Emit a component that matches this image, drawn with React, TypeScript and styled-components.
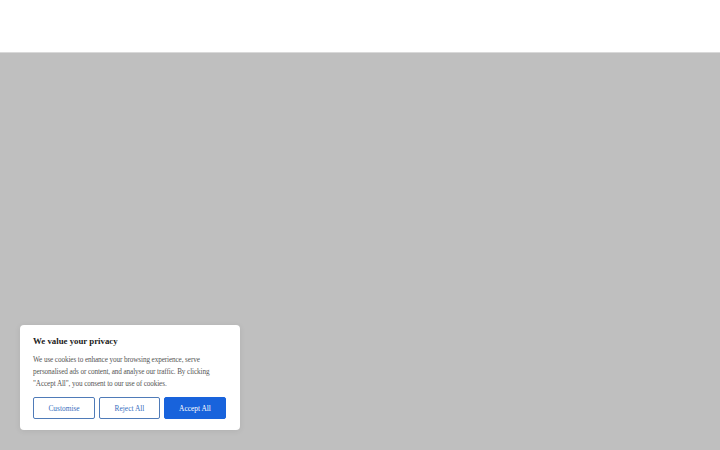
import { createGlobalStyle } from "styled-components";
import styled from "styled-components";

const GlobalStyle = createGlobalStyle`
  html, body {
    margin: 0;
    padding: 0;
    background: #bfbfbf;
  }
  body {
    font-family: "Liberation Serif", "DejaVu Serif", serif;
  }
`;

const Page = styled.div`
  width: 720px;
  height: 450px;
  display: flex;
  flex-direction: column;
  overflow: hidden;
`;

const Header = styled.header`
  height: 52px;
  flex: none;
  background: #ffffff;
  border-bottom: 1px solid #d9d9d9;
`;

const Overlay = styled.main`
  flex: 1;
  background: #bfbfbf;
  display: flex;
  align-items: flex-end;
  padding: 0 0 20px 20px;
`;

const Banner = styled.section`
  width: 220px;
  box-sizing: border-box;
  background: #ffffff;
  border-radius: 4px;
  padding: 10px 14px 11px 13px;
  box-shadow: 0 1px 6px rgba(0, 0, 0, 0.08);
`;

const Title = styled.h2`
  margin: 0 0 7px;
  font-size: 8.8px;
  line-height: 12px;
  font-weight: 700;
  color: #212121;
`;

const Body = styled.p`
  margin: 0 0 7px;
  font-size: 7.2px;
  line-height: 12px;
  color: #555555;
  letter-spacing: -0.1px;
  white-space: nowrap;
`;

const Buttons = styled.div`
  display: grid;
  grid-template-columns: 62px 61px 62px;
  gap: 4px;
`;

const Button = styled.button<{ $primary?: boolean }>`
  height: 22px;
  box-sizing: border-box;
  border: 1.5px solid ${(p) => (p.$primary ? "#1863dc" : "#4f7bb8")};
  border-radius: 2px;
  background: ${(p) => (p.$primary ? "#1863dc" : "#ffffff")};
  color: ${(p) => (p.$primary ? "#ffffff" : "#3a6fc0")};
  font-family: "Liberation Serif", "DejaVu Serif", serif;
  font-size: 7.4px;
  padding: 0;
  cursor: pointer;
`;

export default function App() {
  return (
    <Page>
      <GlobalStyle />
      <Header />
      <Overlay>
        <Banner>
          <Title>We value your privacy</Title>
          <Body>
            We use cookies to enhance your browsing experience, serve
            <br />
            personalised ads or content, and analyse our traffic. By clicking
            <br />
            "Accept All", you consent to our use of cookies.
          </Body>
          <Buttons>
            <Button>Customise</Button>
            <Button>Reject All</Button>
            <Button $primary>Accept All</Button>
          </Buttons>
        </Banner>
      </Overlay>
    </Page>
  );
}
